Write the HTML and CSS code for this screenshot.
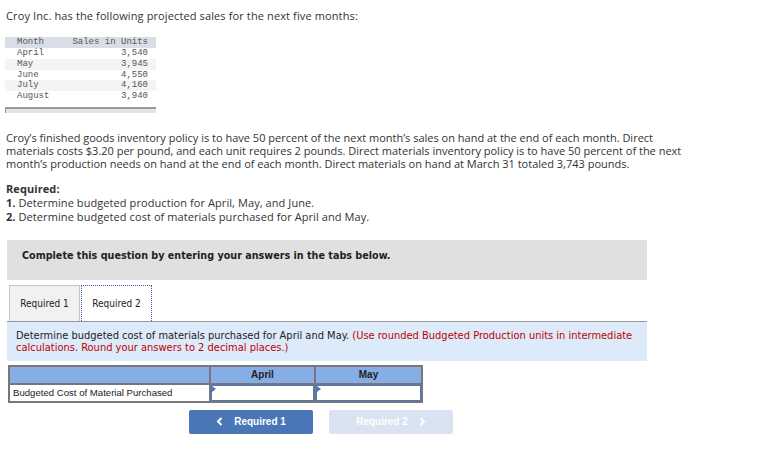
FILE: index.html
```html
<!DOCTYPE html>
<html>
<head>
<meta charset="utf-8">
<link rel="stylesheet" href="styles.css">
</head>
<body>
<div class="page">
  <p class="intro">Croy Inc. has the following projected sales for the next five months:</p>
  <div class="sales">
    <div class="srow shead"><span>Month</span><span>Sales in Units</span></div>
    <div class="srow"><span>April</span><span>3,540</span></div>
    <div class="srow alt"><span>May</span><span>3,945</span></div>
    <div class="srow"><span>June</span><span>4,550</span></div>
    <div class="srow alt"><span>July</span><span>4,160</span></div>
    <div class="srow"><span>August</span><span>3,940</span></div>
    <div class="sbar"></div>
  </div>
  <p class="para">Croy’s finished goods inventory policy is to have 50 percent of the next month’s sales on hand at the end of each month. Direct materials costs $3.20 per pound, and each unit requires 2 pounds. Direct materials inventory policy is to have 50 percent of the next month’s production needs on hand at the end of each month. Direct materials on hand at March 31 totaled 3,743 pounds.</p>
  <div class="req">
    <div class="req-title">Required:</div>
    <div><b>1.</b> Determine budgeted production for April, May, and June.</div>
    <div><b>2.</b> Determine budgeted cost of materials purchased for April and May.</div>
  </div>
  <div class="complete">Complete this question by entering your answers in the tabs below.</div>
  <div class="tabs">
    <div class="tab">Required 1</div>
    <div class="tab active">Required 2</div>
  </div>
  <div class="instr">Determine budgeted cost of materials purchased for April and May. <span class="red">(Use rounded Budgeted Production units in intermediate</span> <span class="red">calculations. Round your answers to 2 decimal places.)</span></div>
  <table class="ans">
    <tr class="ahead"><th class="lab"></th><th>April</th><th>May</th></tr>
    <tr><td class="lab">Budgeted Cost of Material Purchased</td><td class="inp"><span class="flag"></span></td><td class="inp"><span class="flag"></span></td></tr>
  </table>
  <div class="nav">
    <div class="btn prev"><svg class="chev" width="7" height="9" viewBox="0 0 7 9"><polyline points="5.5,1 2,4.5 5.5,8" fill="none" stroke="#fff" stroke-width="2"/></svg>Required 1</div>
    <div class="btn next">Required 2<svg class="chev r" width="7" height="9" viewBox="0 0 7 9"><polyline points="1.5,1 5,4.5 1.5,8" fill="none" stroke="#fff" stroke-width="2"/></svg></div>
  </div>
</div>
</body>
</html>
```
FILE: styles.css
```css
* { box-sizing: border-box; }
body { margin: 0; background: #fff; }
.page { padding: 9px 0 0 6px; width: 720px; font-family: "Open Sans", sans-serif; color: #333; }
.intro { margin: 0; font-size: 11px; line-height: 14px; letter-spacing: 0.12px; }
.sales { margin: 14px 0 0 -1px; width: 151px; font-family: "Liberation Mono", monospace; font-size: 9px; color: #555; }
.srow { display: flex; justify-content: space-between; padding: 0 8px 0 12px; line-height: 10.8px; height: 10.8px; }
.shead { background: #d9dde5; height: 11px; line-height: 11px; }
.alt { background: #f4f4f4; }
.sbar { margin-top: 5px; height: 6px; border-top: 2px solid #9a9a9a; border-left: 1px solid #9a9a9a; background: #e4e4e4; }
.para { margin: 18px 0 0; width: 690px; font-size: 11px; line-height: 13px; }
.req { margin-top: 12px; font-size: 11px; line-height: 14px; letter-spacing: 0.08px; }
.req-title { font-weight: bold; }
.complete { margin: 16px 0 0 1px; height: 40px; width: 640px; background: #e0e0e0; padding: 10px 15px; font-family: "DejaVu Sans Condensed", "DejaVu Sans", sans-serif; font-weight: bold; font-size: 10.7px; line-height: 12px; color: #222; }
.tabs { display: flex; margin: 5px 0 0 3px; height: 36px; }
.tab { width: 71px; border: 1px solid #c4c4c4; border-bottom: none; background: #f1f1f1; font-family: "DejaVu Sans Condensed", "DejaVu Sans", sans-serif; font-size: 10px; color: #222; display: flex; align-items: center; justify-content: center; }
.tab.active { background: #fff; border: 1px dotted #3c5ea8; border-bottom: none; margin-left: 1px; }
.instr { margin-left: 1px; width: 640px; height: 40px; background: #dceafa; border-top: 1px solid #999; padding: 8px 9px; font-family: "DejaVu Sans Condensed", "DejaVu Sans", sans-serif; font-size: 11px; line-height: 12px; color: #222; }
.red { color: #c00000; }
.ans { margin: 4px 0 0 2px; border-collapse: collapse; font-family: "Liberation Sans", Arial, sans-serif; font-size: 9.6px; color: #222; }
.ans th, .ans td { border: 2px solid #777; padding: 0; }
.ahead { background: #86ade6; height: 18px; }
.ahead th { font-weight: bold; font-size: 10px; }
.ans th:nth-child(2), .ans td:nth-child(2) { width: 105px; }
.ans th:nth-child(3), .ans td:nth-child(3) { width: 107px; }
.lab { width: 201px; text-align: left; padding-left: 3px !important; height: 18px; }
.inp { position: relative; background: #fff; box-shadow: inset 0 0 0 1px #4a78c0; }
.flag { position: absolute; left: 1px; top: 1px; width: 0; height: 0; border-top: 3px solid transparent; border-bottom: 3px solid transparent; border-left: 4px solid #4a78c0; }
.nav { display: flex; gap: 16px; margin: 7px 0 0 183px; }
.btn { width: 124px; height: 24px; border-radius: 2px; display: flex; align-items: center; justify-content: center; font-family: "Liberation Sans", Arial, sans-serif; font-weight: bold; font-size: 10px; color: #fff; }
.prev { background: #4a76b8; }
.next { background: #dae3f1; }
.chev { margin-right: 11px; }
.chev.r { margin: 0 0 0 11px; }
```
